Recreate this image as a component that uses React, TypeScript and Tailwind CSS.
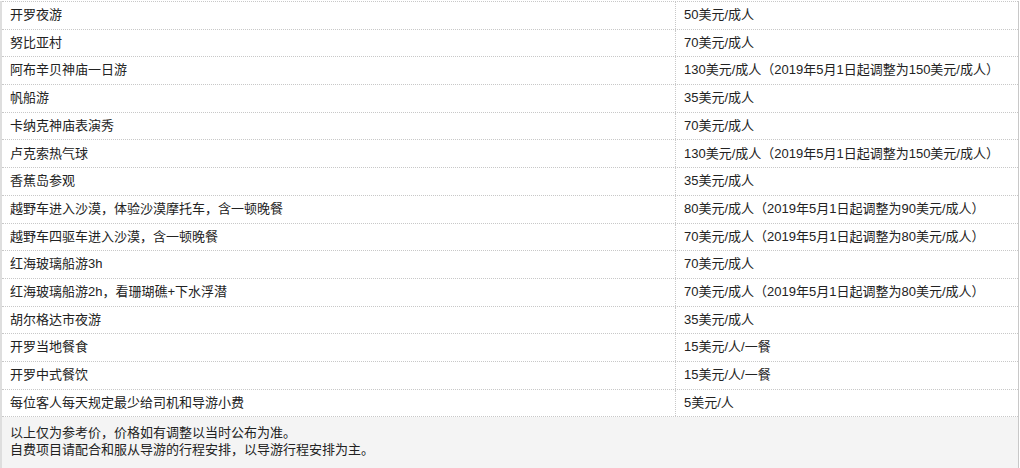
const items: [string, string][] = [
  ["开罗夜游", "50美元/成人"],
  ["努比亚村", "70美元/成人"],
  ["阿布辛贝神庙一日游", "130美元/成人（2019年5月1日起调整为150美元/成人）"],
  ["帆船游", "35美元/成人"],
  ["卡纳克神庙表演秀", "70美元/成人"],
  ["卢克索热气球", "130美元/成人（2019年5月1日起调整为150美元/成人）"],
  ["香蕉岛参观", "35美元/成人"],
  ["越野车进入沙漠，体验沙漠摩托车，含一顿晚餐", "80美元/成人（2019年5月1日起调整为90美元/成人）"],
  ["越野车四驱车进入沙漠，含一顿晚餐", "70美元/成人（2019年5月1日起调整为80美元/成人）"],
  ["红海玻璃船游3h", "70美元/成人"],
  ["红海玻璃船游2h，看珊瑚礁+下水浮潜", "70美元/成人（2019年5月1日起调整为80美元/成人）"],
  ["胡尔格达市夜游", "35美元/成人"],
  ["开罗当地餐食", "15美元/人/一餐"],
  ["开罗中式餐饮", "15美元/人/一餐"],
  ["每位客人每天规定最少给司机和导游小费", "5美元/人"],
];

export default function App() {
  return (
    <div className="w-[1020px] h-[468px] overflow-hidden bg-white pt-px text-[13px] text-[#222] font-['Liberation_Sans','Noto_Sans_CJK_SC',sans-serif]">
      <div className="w-[1019px] border-l-2 border-l-[#dedede] border-r border-r-[#c8c8c8] border-r-dotted">
        <div className="border-t border-dotted border-[#c8c8c8]">
          {items.map(([name, price]) => (
            <div
              key={name}
              className="grid grid-cols-[674px_1fr] h-[27.7px] border-b border-dotted border-[#c8c8c8]"
            >
              <div className="flex items-center pl-2 pb-px border-r border-dotted border-[#c8c8c8]">{name}</div>
              <div className="flex items-center pl-2 pb-px">{price}</div>
            </div>
          ))}
        </div>
        <div className="bg-[#f4f4f4] h-[60px] pl-2 pt-[7px] leading-[17px]">
          <p>以上仅为参考价，价格如有调整以当时公布为准。</p>
          <p>自费项目请配合和服从导游的行程安排，以导游行程安排为主。</p>
        </div>
      </div>
    </div>
  );
}
